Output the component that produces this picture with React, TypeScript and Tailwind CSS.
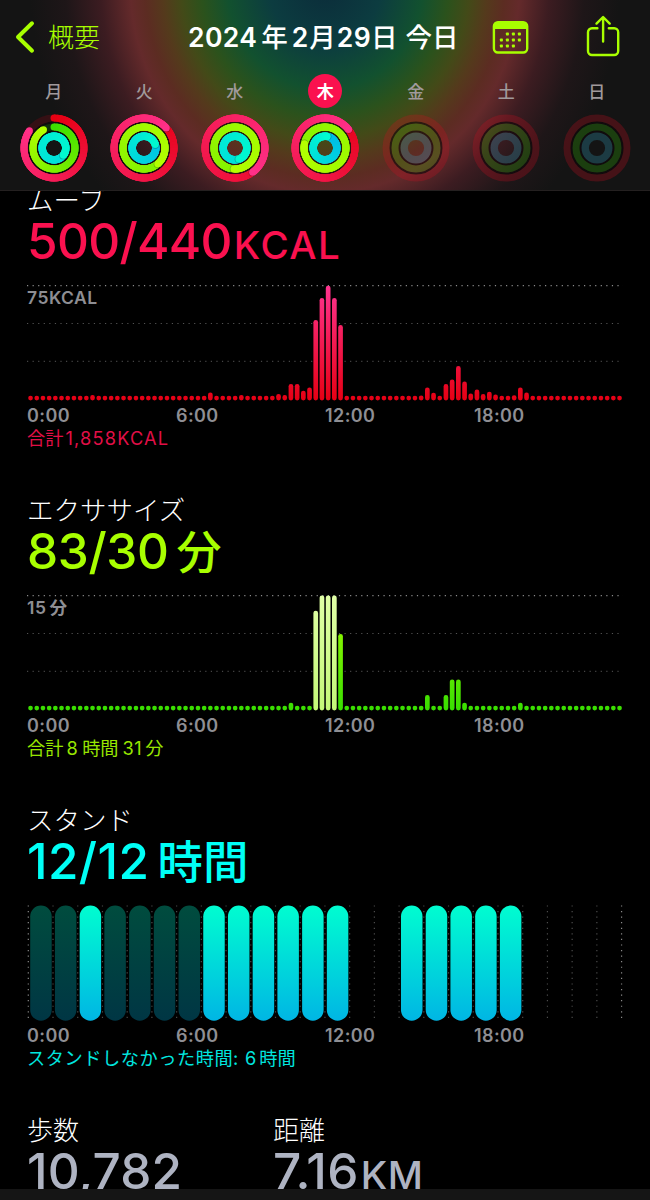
import React from 'react';

type Rgb = [number, number, number];

interface DayRings {
  label: string;
  // degrees swept by the move / exercise / stand rings
  rings?: [number, number, number];
  today?: boolean;
}

const DAYS: DayRings[] = [
  { label: '月', rings: [305, 330, 847] },
  { label: '火', rings: [408, 859, 432] },
  { label: '水', rings: [504, 903, 880] },
  { label: '木', rings: [412, 1002, 370], today: true },
  { label: '金' },
  { label: '土' },
  { label: '日' },
];

const RING_STYLES: { r: number; width: number; from: Rgb; to: Rgb; track: string; dim: string }[] = [
  { r: 30, width: 7, from: [230, 0, 18], to: [255, 48, 136], track: '#351014', dim: 'rgba(215,10,30,0.25)' },
  { r: 21, width: 7, from: [60, 222, 0], to: [180, 255, 0], track: '#10300c', dim: 'rgba(50,205,0,0.23)' },
  { r: 11.8, width: 7.4, from: [0, 184, 232], to: [0, 250, 208], track: '#0c2c30', dim: 'rgba(50,165,195,0.27)' },
];

const SLOTS = 96;

const MOVE_BARS: Record<number, number> = {
  10: 5.3, 29: 8, 34: 5.5, 40: 6.5, 41: 5.3, 42: 16.5, 43: 16.5, 44: 9.7, 45: 13,
  46: 80.5, 47: 102.5, 48: 114.7, 49: 102.5, 50: 75.3,
  63: 5, 64: 13, 65: 7.7, 67: 16.3, 68: 20.8, 69: 34.3, 70: 18.8, 71: 7, 72: 10.8,
  73: 6.3, 74: 8.7, 75: 5.8, 78: 5.2, 79: 13, 80: 7.8,
};

const EXERCISE_BARS: Record<number, number> = {
  42: 7.7, 46: 99.7, 47: 115, 48: 115, 49: 115, 50: 76.5,
  64: 15.3, 67: 15.3, 68: 31, 69: 31, 70: 7.7, 79: 7.7,
};

const STOOD = [2, 7, 8, 9, 10, 11, 12, 15, 16, 17, 18, 19];
const MISSED = [0, 1, 3, 4, 5, 6];

const mix = (a: Rgb, b: Rgb, t: number) =>
  `rgb(${a.map((v, i) => Math.round(v + (b[i] - v) * t)).join(',')})`;

const point = (r: number, deg: number) => {
  const a = ((deg - 90) * Math.PI) / 180;
  return [34 + r * Math.cos(a), 34 + r * Math.sin(a)];
};

const Rings: React.FC<{ values?: [number, number, number] }> = ({ values }) => (
  <svg width="68" height="68" viewBox="0 0 68 68">
    {/* dark gaps between the rings */}
    <circle cx="34" cy="34" r="25.5" fill="none" stroke="rgba(15,5,8,0.6)" strokeWidth="2" />
    <circle cx="34" cy="34" r="16.5" fill="none" stroke="rgba(15,5,8,0.6)" strokeWidth="2" />
    {RING_STYLES.map((s, i) => {
      if (!values) {
        return <circle key={i} cx="34" cy="34" r={s.r} fill="none" stroke={s.dim} strokeWidth={s.width} />;
      }
      const end = values[i];
      const start = Math.max(0, end - 360);
      const steps = 60;
      const size = (end - start) / steps;
      const full = start > 0;
      const [sx, sy] = point(s.r, start);
      const [ex, ey] = point(s.r, end);
      const [hx, hy] = point(s.r, end + 40 / s.r);
      return (
        <g key={i}>
          <circle
            cx="34"
            cy="34"
            r={s.r}
            fill="none"
            stroke={full ? mix(s.from, s.to, 0.6) : s.track}
            strokeWidth={s.width}
          />
          {!full && <circle cx={sx} cy={sy} r={s.width / 2} fill={mix(s.from, s.to, 0)} />}
          {Array.from({ length: steps }, (_, k) => {
            const a = start + k * size;
            // each piece runs under the following ones so no seam shows
            const [x1, y1] = point(s.r, a);
            const [x2, y2] = point(s.r, Math.min(end, a + size * 3));
            return (
              <path
                key={k}
                d={`M${x1} ${y1}A${s.r} ${s.r} 0 0 1 ${x2} ${y2}`}
                fill="none"
                stroke={mix(s.from, s.to, a / end)}
                strokeWidth={s.width}
              />
            );
          })}
          {full && <circle cx={hx} cy={hy} r={s.width / 2} fill="rgba(0,0,0,0.25)" />}
          <circle cx={ex} cy={ey} r={s.width / 2} fill={mix(s.from, s.to, 1)} />
        </g>
      );
    })}
  </svg>
);

const GridRows: React.FC = () => (
  <g stroke="#8a8a8a" strokeWidth="1.2" strokeDasharray="1.2 4.37">
    <line x1="0" x2="596" y1="2.6" y2="2.6" />
    <line x1="0" x2="596" y1="40.5" y2="40.5" opacity="0.6" />
    <line x1="0" x2="596" y1="78.3" y2="78.3" opacity="0.5" />
  </g>
);

interface BarChartProps {
  id: string;
  bars: Record<number, number>;
  top: string;
  bottom: string;
  peak?: number[];
}

const BarChart: React.FC<BarChartProps> = ({ id, bars, top, bottom, peak = [] }) => (
  <svg width="596" height="120" viewBox="0 0 596 120" className="block">
    <defs>
      <linearGradient id={id} gradientUnits="userSpaceOnUse" x1="0" x2="0" y1="2" y2="117">
        <stop offset="0" stopColor={top} />
        <stop offset="1" stopColor={bottom} />
      </linearGradient>
      <linearGradient id={`${id}-peak`} gradientUnits="userSpaceOnUse" x1="0" x2="0" y1="2" y2="117">
        <stop offset="0" stopColor="#e0ffa6" />
        <stop offset="1" stopColor="#c4f878" />
      </linearGradient>
    </defs>
    <GridRows />
    {Array.from({ length: SLOTS }, (_, i) => {
      const h = bars[i] ?? 4.6;
      return (
        <rect
          key={i}
          x={1.2 + i * 6.2}
          y={117.4 - h}
          width="4.7"
          height={h}
          rx="2.3"
          fill={`url(#${peak.includes(i) ? `${id}-peak` : id})`}
        />
      );
    })}
  </svg>
);

const StandChart: React.FC = () => (
  <svg width="596" height="120" viewBox="0 0 596 120" className="block">
    <defs>
      <linearGradient id="stand" x1="0" x2="0" y1="0" y2="1">
        <stop offset="0" stopColor="#00fdd0" />
        <stop offset="1" stopColor="#00b6e4" />
      </linearGradient>
      <linearGradient id="stand-dim" x1="0" x2="0" y1="0" y2="1">
        <stop offset="0" stopColor="#004c3e" />
        <stop offset="1" stopColor="#003644" />
      </linearGradient>
    </defs>
    {Array.from({ length: 25 }, (_, i) => (
      <line
        key={i}
        x1={1.3 + i * 24.72}
        x2={1.3 + i * 24.72}
        y1="2.4"
        y2="117"
        stroke="#8a8a8a"
        strokeWidth="1.2"
        strokeDasharray="1.2 4.37"
        opacity={i === 0 || i === 24 ? 1 : 0.55}
      />
    ))}
    {[...MISSED, ...STOOD].map(h => (
      <rect
        key={h}
        x={3.2 + h * 24.72}
        y="2.5"
        width="21.5"
        height="115.2"
        rx="10.7"
        fill={STOOD.includes(h) ? 'url(#stand)' : 'url(#stand-dim)'}
      />
    ))}
  </svg>
);

interface SectionProps {
  title: string;
  value: React.ReactNode;
  color: string;
  limit?: React.ReactNode;
  footer: React.ReactNode;
  children: React.ReactNode;
}

const Section: React.FC<SectionProps> = ({ title, value, color, limit, footer, children }) => (
  <section className="h-[310px] shrink-0 pl-[27px]">
    <h2 className="h-8 text-[26.5px] leading-[30px] font-light text-white">{title}</h2>
    <div className={`flex h-[50px] items-baseline text-[49.5px] leading-[49px] font-medium whitespace-nowrap ${color}`}>
      {value}
    </div>
    <div className="relative mt-4">
      {children}
      {limit && (
        <span className="absolute top-[5px] left-0 flex gap-[3px] text-[17.5px] leading-5 font-semibold tracking-[0.5px] text-[#8e8e93]">
          {limit}
        </span>
      )}
    </div>
    <div className="grid h-6 grid-cols-[149px_149px_149px_149px] text-[18px] leading-[26px] font-semibold tracking-[0.4px] text-[#8e8e93]">
      <span>0:00</span>
      <span>6:00</span>
      <span>12:00</span>
      <span>18:00</span>
    </div>
    <p className={`flex h-6 items-baseline gap-[2px] text-[18.2px] leading-[23px] whitespace-nowrap opacity-90 ${color}`}>{footer}</p>
  </section>
);

const CalendarIcon: React.FC = () => (
  <svg width="38" height="36" viewBox="0 0 38 36" fill="#a8ff00">
    <rect x="1.9" y="3.2" width="33.3" height="30.3" rx="4" fill="none" stroke="#a8ff00" strokeWidth="2.4" />
    <path d="M1.7 10V7a4 4 0 0 1 4-4h25.7a4 4 0 0 1 4 4v3z" />
    {[
      [15.4, 15], [21.4, 15], [27.4, 15],
      [9.4, 21], [15.4, 21], [21.4, 21], [27.4, 21],
      [9.4, 27], [15.4, 27], [21.4, 27],
    ].map(([x, y]) => (
      <rect key={`${x}-${y}`} x={x - 1.5} y={y - 1.5} width="3" height="3" rx="0.8" />
    ))}
  </svg>
);

const ShareIcon: React.FC = () => (
  <svg width="36" height="44" viewBox="0 0 36 44" fill="none" stroke="#a8ff00" strokeWidth="2.4" strokeLinecap="round" strokeLinejoin="round">
    <path d="M12.4 13.3H7a4 4 0 0 0-4 4V36a4 4 0 0 0 4 4h22.2a4 4 0 0 0 4-4V17.3a4 4 0 0 0-4-4h-5.4" />
    <path d="M18.1 26.6V2.5M11.5 8.600l6.600-6.600 6.600 6.600" />
  </svg>
);

export default function App() {
  return (
    <div className="flex h-[1200px] w-[650px] flex-col overflow-hidden bg-black font-['Inter','Noto_Sans_CJK_JP',sans-serif]">
      <header className="h-[191px] shrink-0 border-b border-[#242020] bg-[radial-gradient(295px_315px_at_325px_-15px,#0b2c3a_0%,#0c3c40_19%,#12512f_33%,#2b521c_42%,#434a18_49%,#543a1c_55%,#5c2c22_61%,#642a2b_66%,#3c1c21_76%,#1e1618_88%,#141414_100%)]">
        <div className="flex h-[74px] items-center">
          <div className="flex w-[188px] items-center pl-[14px] text-[#a8ff00]">
            <svg width="22" height="34" viewBox="0 0 22 34" fill="none" stroke="#a8ff00" strokeWidth="4" strokeLinecap="round" strokeLinejoin="round">
              <path d="M18 3.3L4 17l14 13.7" />
            </svg>
            <span className="mt-[2px] ml-[12px] text-[26px] leading-8 font-light">概要</span>
          </div>
          <h1 className="flex w-[304px] items-baseline text-[26.5px] leading-8 font-semibold whitespace-nowrap text-white">
            <span className="tracking-[0.4px]">2024</span>
            <span className="ml-[4px] font-medium">年</span>
            <span className="ml-[4px]">2</span>
            <span className="ml-px font-medium">月</span>
            <span className="ml-px tracking-[0.3px]">29</span>
            <span className="font-medium">日</span>
            <span className="ml-[8px] font-medium">今日</span>
          </h1>
          <CalendarIcon />
          <div className="ml-[55px]">
            <ShareIcon />
          </div>
        </div>
        <div className="grid grid-cols-[repeat(7,90.5px)] pl-[8.5px]">
          {DAYS.map(d => (
            <div key={d.label} className="flex flex-col items-center">
              <div
                className={`flex size-[34px] items-center justify-center rounded-full pt-[2px] text-[17px] leading-none ${
                  d.today ? 'bg-[#fa114f] font-bold text-white' : 'font-medium text-[#a09a9c]'
                }`}
              >
                {d.label}
              </div>
              <div className="mt-[6.3px]">
                <Rings values={d.rings} />
              </div>
            </div>
          ))}
        </div>
      </header>

      <main className="h-[998px] shrink-0 overflow-hidden">
        <div className="-mt-[6px] flex flex-col">
          <Section
            title="ムーブ"
            color="text-[#fa114f]"
            value={
              <>
                <span className="tracking-[-0.7px]">500/440</span>
                <span className="ml-[2px] text-[38.5px] tracking-[1.5px]">KCAL</span>
              </>
            }
            limit="75KCAL"
            footer={
              <>
                <span>合計</span>
                <span className="tracking-[1.2px]">1,858KCAL</span>
              </>
            }
          >
            <BarChart id="move" bars={MOVE_BARS} top="#ff3490" bottom="#e60014" />
          </Section>

          <Section
            title="エクササイズ"
            color="text-[#a8ff00]"
            value={
              <>
                <span className="tracking-[-0.4px]">83/30</span>
                <span className="ml-[8px] text-[45px]">分</span>
              </>
            }
            limit={
              <>
                <span>15</span>
                <span>分</span>
              </>
            }
            footer={
              <>
                <span>合計</span>
                <span className="ml-px tracking-[0.5px]">8</span>
                <span className="ml-[2px]">時間</span>
                <span className="ml-[2px] tracking-[0.5px]">31</span>
                <span className="ml-px">分</span>
              </>
            }
          >
            <BarChart id="exercise" bars={EXERCISE_BARS} top="#aaff00" bottom="#38de00" peak={[46, 47, 48, 49]} />
          </Section>

          <Section
            title="スタンド"
            color="text-[#00fff6]"
            value={
              <>
                <span className="tracking-[0.4px]">12/12</span>
                <span className="ml-[8px] text-[45.5px]">時間</span>
              </>
            }
            footer={
              <>
                <span className="tracking-[0.55px]">スタンドしなかった時間:</span>
                <span className="ml-[4px]">6</span>
                <span className="ml-px">時間</span>
              </>
            }
          >
            <StandChart />
          </Section>

          <section className="grid grid-cols-[246px_1fr] pl-[27px]">
            <div>
              <h2 className="h-8 text-[26px] leading-8 font-light text-white">歩数</h2>
              <p className="flex items-baseline text-[49.5px] leading-[49px] font-medium tracking-[0.1px] text-[#aeb3c2]">10,782</p>
            </div>
            <div>
              <h2 className="h-8 text-[26px] leading-8 font-light text-white">距離</h2>
              <p className="flex items-baseline text-[49.5px] leading-[49px] font-medium text-[#aeb3c2]">
                <span className="tracking-[0.3px]">7.16</span>
                <span className="ml-[2px] text-[38.5px] tracking-[0.5px]">KM</span>
              </p>
            </div>
          </section>
        </div>
      </main>

      <footer className="h-[11px] shrink-0 bg-[#151515]" />
    </div>
  );
}
